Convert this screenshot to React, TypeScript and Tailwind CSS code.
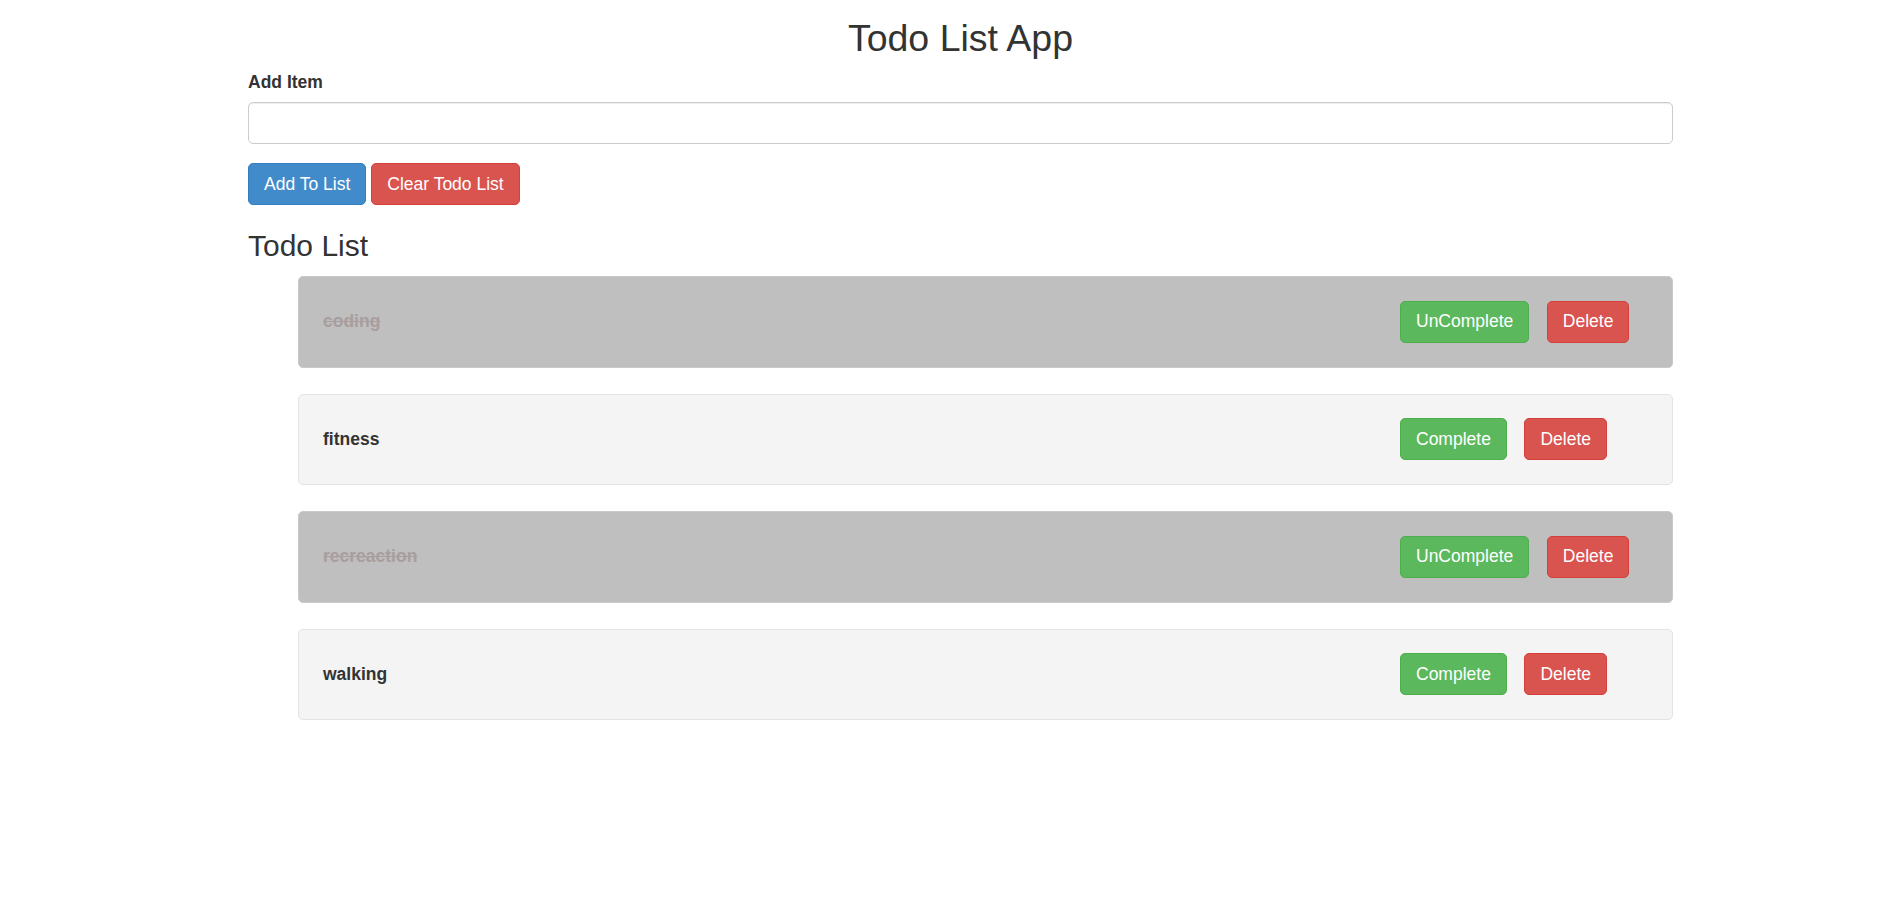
import { useState } from 'react'

type Todo = { id: number; text: string; done: boolean }

const font = { fontFamily: '"Liberation Sans", Arial, Helvetica, sans-serif' }

const btn =
  'inline-block border rounded-[5px] px-[15px] py-[7.5px] text-[17.5px] leading-[25px] text-white cursor-pointer'
const btnGreen = `${btn} bg-[#5cb85c] border-[#4cae4c]`
const btnRed = `${btn} bg-[#d9534f] border-[#d43f3a]`
const btnBlue = `${btn} bg-[#428bca] border-[#357ebd]`

const initialTodos: Todo[] = [
  { id: 1, text: 'coding', done: true },
  { id: 2, text: 'fitness', done: false },
  { id: 3, text: 'recreaction', done: true },
  { id: 4, text: 'walking', done: false },
]

export default function App() {
  const [todos, setTodos] = useState<Todo[]>(initialTodos)
  const [draft, setDraft] = useState('')

  const add = () => {
    if (!draft.trim()) return
    setTodos([...todos, { id: Date.now(), text: draft.trim(), done: false }])
    setDraft('')
  }

  const toggle = (id: number) =>
    setTodos(todos.map((t) => (t.id === id ? { ...t, done: !t.done } : t)))

  const remove = (id: number) => setTodos(todos.filter((t) => t.id !== id))

  return (
    <div className="min-h-screen bg-white text-[#333]" style={font}>
      <div className="ml-[248px] w-[1425px]">
        <h1 className="mt-[18px] text-center text-[37.5px] leading-[40px] font-normal">
          Todo List App
        </h1>

        <label htmlFor="add-item" className="mt-[12px] mb-[7px] block text-[17.5px] leading-[25px] font-bold">
          Add Item
        </label>
        <input
          id="add-item"
          type="text"
          value={draft}
          onChange={(e) => setDraft(e.target.value)}
          className="block h-[42px] w-full rounded-[5px] border border-[#ccc] px-[15px] text-[17.5px] shadow-[inset_0_1px_1px_rgba(0,0,0,0.075)] outline-none"
        />

        <div className="mt-[19px] flex gap-[5px]">
          <button type="button" onClick={add} className={btnBlue}>
            Add To List
          </button>
          <button type="button" onClick={() => setTodos([])} className={btnRed}>
            Clear Todo List
          </button>
        </div>

        <h3 className="mt-[25px] text-[30px] leading-[32px] font-normal">Todo List</h3>

        <ul className="mt-[14px] ml-[50px]">
          {todos.map((t) => (
            <li
              key={t.id}
              className={`mb-[26px] grid h-[91.5px] grid-cols-[1fr_272px] items-center rounded-[5px] border pl-[24px] ${
                t.done ? 'bg-[#bfbfbf] border-[#c9c9c9]' : 'bg-[#f4f4f4] border-[#e3e3e3]'
              }`}
            >
              <span
                className={`text-[17.5px] leading-[25px] font-bold ${
                  t.done ? 'text-[#a89e9e] line-through' : 'text-[#333]'
                }`}
              >
                {t.text}
              </span>
              <div className="flex gap-[17.5px]">
                <button type="button" onClick={() => toggle(t.id)} className={btnGreen}>
                  {t.done ? 'UnComplete' : 'Complete'}
                </button>
                <button type="button" onClick={() => remove(t.id)} className={btnRed}>
                  Delete
                </button>
              </div>
            </li>
          ))}
        </ul>
      </div>
    </div>
  )
}
